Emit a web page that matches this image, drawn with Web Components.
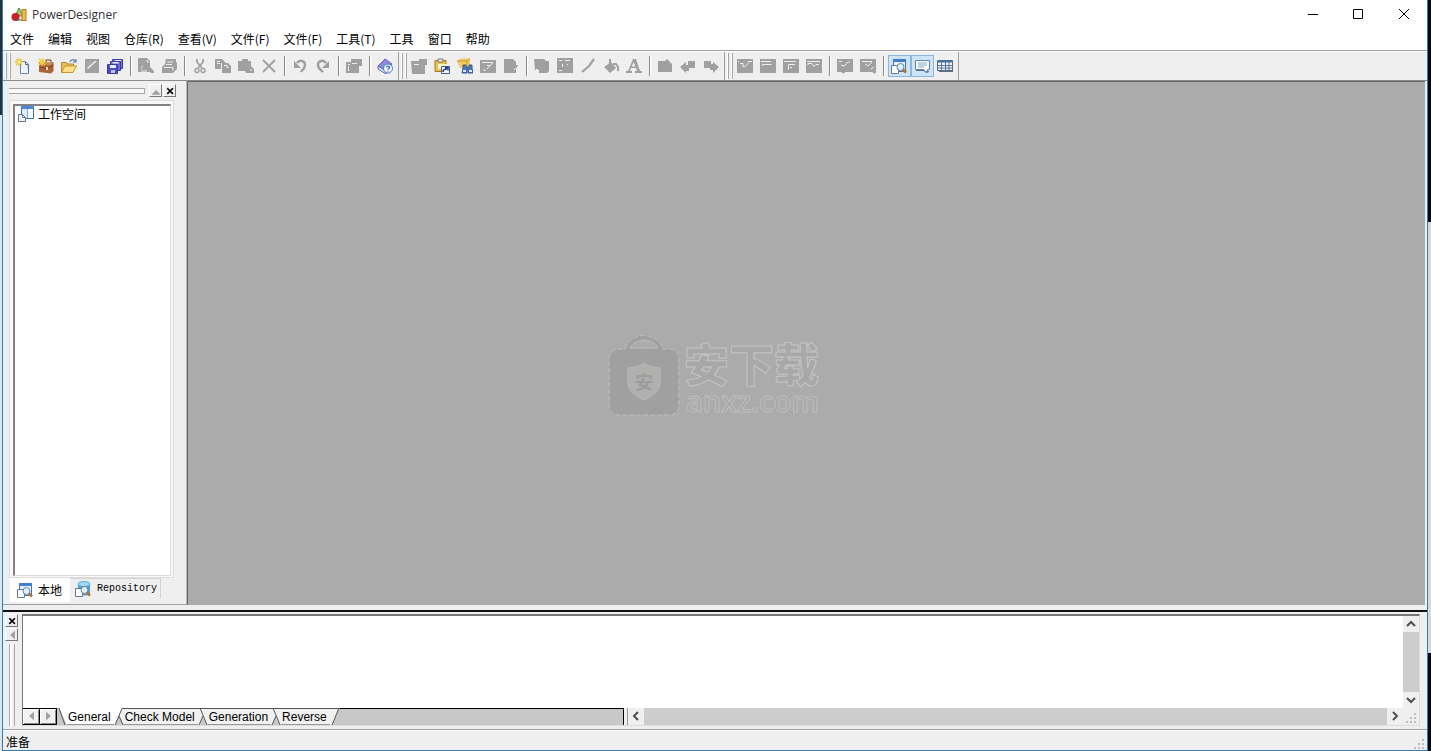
<!DOCTYPE html>
<html lang="zh-CN">
<head>
<meta charset="utf-8">
<title>PowerDesigner</title>
<style>
  html, body { margin: 0; height: 100%; overflow: hidden; }
  body { font: 12px/16px "Noto Sans CJK SC", "Open Sans", sans-serif; color: #000; }
</style>
</head>
<body>
<pd-app></pd-app>
<script>
const G = '#a0a0a0', L = '#efefef';
const ICONS = {
  app: `<path d="M8 1 12 9H4Z" fill="#9bd36a" stroke="#4f8a35"/><rect x="11" y="2.500" width="4" height="11" fill="#f3bb4c" stroke="#b57b1e"/><circle cx="4.500" cy="10" r="4" fill="#c8202c"/><path d="M4 13h7" stroke="#555"/>`,
  new: `<path d="M5.500 3.500h5l3 3v9h-8Z" fill="#eef4fd" stroke="#6d86ad"/><path d="M10.500 3.500v3h3v8" fill="#b9cff0" stroke="#4d6ea3"/><path d="M4 0v8M0 4h8M1 1l6 6M7 1 1 7" stroke="#e8c532" stroke-width="1.300"/><circle cx="4" cy="4" r="1.500" fill="#fff9a8"/>`,
  project: `<path d="M1 4h14.500v9L13 15.500 1 14Z" fill="#a8663a"/><path d="M1 4h14.500l-3 3H2Z" fill="#c98f60"/><path d="M8 4V2h5v2" fill="none" stroke="#6b3819"/><path d="M2 9l6 1.500 5-1.500 2.500-2" fill="none" stroke="#7b4823"/><path d="M8 9h2v3H8z" fill="#e9d0b0"/><path d="M4 0v8M0 4h8M1 1l6 6M7 1 1 7" stroke="#f0cf3a" stroke-width="1.200"/>`,
  open: `<path d="M.500 14.500v-10h5l1 1.500h6v3" fill="#e8bd52" stroke="#b58a30"/><path d="M.500 14.500 4 8h11.500L12 14.500Z" fill="#ffe08a" stroke="#c59630"/><path d="M9 4c1-3 4-3 5.500-.500M15 1v3h-3" fill="none" stroke="#5f7fb2" stroke-width="1.200"/>`,
  save: `<path d="M1 1h14v14H1z" fill="${G}"/><path d="M3 3h9v1L4 11H3z" fill="#a8a8a8"/><path d="M3 10 11 3h2L4 11z" fill="${L}"/>`,
  saveall: `<g stroke="#3b3b9c"><path d="M5.500 1.500h10v9h-10z" fill="#7b7bdc"/><path d="M3.500 3.500h10v9h-10z" fill="#6d6dd4"/><path d="M.500 6.500h10v9h-10z" fill="#4d4dbd"/></g><path d="M3 7h6v3H3zM5.500 4h6v1.500h-6zM8 2h6v1H8z" fill="#e8ecff"/><path d="M4 12h4v3H4z" fill="#b9c0ee"/>`,
  preview: `<path d="M1 0h8l3 3v6l4 4v2h-3l-1-1H0V1z" fill="${G}"/><path d="M3 11c1-1 1-2 1.500-3.500M9 2v2h2" fill="none" stroke="${L}"/><circle cx="8" cy="8" r="3" fill="${G}"/><path d="M3 13h6" stroke="${L}"/>`,
  print: `<path d="M5 1h10v3l1 1v6l-4 4H1V9l3-3z" fill="${G}"/><path d="M6 4h6M5 6.500h6M3 9.500h9v3" fill="none" stroke="${L}"/>`,
  cut: `<path d="M5 1v3l5 6M11 1v3L6 10" fill="none" stroke="${G}" stroke-width="1.800"/><circle cx="5" cy="12.500" r="2" fill="none" stroke="${G}" stroke-width="1.500"/><circle cx="11" cy="12.500" r="2" fill="none" stroke="${G}" stroke-width="1.500"/>`,
  copy: `<path d="M0 1h7l3 3v7H0zM7 5h6l3 3v7H7z" fill="${G}"/><path d="M2 3.500h3M2 5.500h3M6.500 5v7M9 7.500h3v2h2" fill="none" stroke="${L}"/>`,
  paste: `<path d="M0 3h4V1h6v2h3v5l3 3v4H8l-1-2H0z" fill="${G}"/><path d="M12 12h2" stroke="${L}"/>`,
  del: `<path d="M2 2l12 12M14 2 2 14" stroke="${G}" stroke-width="1.800"/>`,
  undo: `<path d="M5 5c3-4 8-2 8 2 0 4-3 5-4 7" fill="none" stroke="${G}" stroke-width="2.400"/><path d="M2 3v7h7z" fill="${G}"/>`,
  redo: `<path d="M11 5C8 1 3 3 3 7c0 4 3 5 5 7" fill="none" stroke="${G}" stroke-width="2.400"/><path d="M14 3v7H7z" fill="${G}"/>`,
  props: `<path d="M5 1h11v7h-3v7H0V4h5z" fill="${G}"/><path d="M2 6.500h2M2.500 8v5M6 5.500h5" stroke="${L}"/>`,
  help: `<path d="M1 8 8 1l7 5-6 8z" fill="#8c8cdc" stroke="#6464b8"/><path d="M1 8v3l8 5v-3z" fill="#e5e5fa" stroke="#6464b8"/><circle cx="11" cy="10.500" r="4.500" fill="#f2f7ff" stroke="#477bc0"/><path d="M9.500 9.500c0-2 3-2 3 0 0 1-1.500 1-1.500 2M11 12.500v1" fill="none" stroke="#285ca8" stroke-width="1.200"/>`,
  newobj: `<path d="M0 3h8V1h8v6h-2v9H1z" fill="${G}"/><path d="M3 6.500h5" stroke="${L}"/>`,
  pasteSc: `<path d="M1 2.500h11v11H1z" fill="#eabf4e" stroke="#a77b20"/><path d="M4 1h5v3H4z" fill="#eee" stroke="#777"/><path d="M4 6h9v5H4z" fill="#fff4c9"/><path d="M7.500 8.500h8v7h-8z" fill="#f2f7ff" stroke="#3f5c99"/><path d="M9 14c0-3 2-3 4-3M11 9.500h3v3" fill="none" stroke="#223a80" stroke-width="1.500"/>`,
  find: `<path d="M0 3 3 .500h10V8L10 10H3z" fill="#f3cc62"/><path d="M0 3h10l3-2.500M10 3v5" fill="none" stroke="#c89a38"/><path d="M6 7h3v2h3V7h3v3l1 5h-5v-3h-1v3H5l1-5z" fill="#4a76b8" stroke="#3a5c92"/><path d="M6 13h3M12 13h3" stroke="#dce9ff" stroke-width="2"/>`,
  edit: `<path d="M0 2h16v13H0z" fill="${G}"/><path d="M2 4.500h11L7 11M3 12h3M7 7.500h3" fill="none" stroke="${L}"/>`,
  page: `<path d="M1 1h9l3 3v3h2l-2 4v4H1z" fill="${G}"/><path d="M11 12l2-2" stroke="${L}"/>`,
  layers: `<path d="M0 1h10l2 2h3v10l-2 2H5v-3H1z" fill="${G}"/><path d="M2 11.500h2M3.500 13h1" stroke="${L}"/>`,
  grid: `<path d="M0 0h16v15H0z" fill="${G}"/><path d="M2 2.500h3M2 12.500h3M8 2.500h5M5.500 6v3M10 6.500h1" stroke="${L}"/>`,
  line: `<path d="M2 14 9 8l5-7" fill="none" stroke="${G}" stroke-width="2.200"/>`,
  fill: `<path d="M1 9 8 4l5 6-6 5z" fill="${G}"/><path d="M7 7V1M10 6h3l2 3v4" fill="none" stroke="${G}" stroke-width="2"/>`,
  text: `<path d="M7 1h3l4 12h2v2H9v-2h2l-1-3H5l-1 3h2v2H0v-2h2zM5.700 8.500h3.700L7.600 4z" fill="${G}"/>`,
  up: `<path d="M1 3h7l2-2 5 5v8H1z" fill="${G}"/>`,
  left: `<path d="M0 9 6 4v3h2V3h7v7H9v3H6v2z" fill="${G}"/>`,
  right: `<path d="M16 9 10 4v2H8V3H1v7h6v2h3v3z" fill="${G}"/>`,
  c1: `<path d="M0 1h16v14H0z" fill="${G}"/><path d="M1 3.500h1M3 5.500h3v3h2l4-4M11 3.500h4" fill="none" stroke="${L}"/>`,
  c2: `<path d="M0 1h16v14H0z" fill="${G}"/><path d="M1 3.500h10M2.500 8V6.500h9" fill="none" stroke="${L}"/>`,
  c3: `<path d="M0 1h16v14H0z" fill="${G}"/><path d="M1 3.500h12M5.500 12V6.500H12M7 9.500h2" fill="none" stroke="${L}"/>`,
  c4: `<path d="M0 1h16v14H0z" fill="${G}"/><path d="M1 3.500h13M2 7V5.500h4l2 3 2-2h3" fill="none" stroke="${L}"/>`,
  d1: `<path d="M0 1h16v13h-8l-1 2-3-2H0z" fill="${G}"/><path d="M2 3.500h3M4 7l3 1 4-4h2" fill="none" stroke="${L}"/>`,
  d2: `<path d="M0 1h16v13l-1 2-3-2H0z" fill="${G}"/><path d="M2 3.500h10M5 6l3 2 4-4M11 11l3-2" fill="none" stroke="${L}"/>`,
  browser: `<path d="M2.500 1.500h12v12h-12z" fill="#e8f3ff" stroke="#3f72b4"/><path d="M2 1h13v3H2z" fill="#3f7ed0"/><path d="M.500 7.500h5l2 2v6h-7z" fill="#fff" stroke="#68798c"/><circle cx="9.500" cy="9" r="3.500" fill="#dff1fc" stroke="#66839d"/><path d="m12 11.500 3 3" stroke="#b5702e" stroke-width="2.500"/>`,
  output: `<path d="M1.500 2.500h14v9h-2v2h-2l-2-2h-8z" fill="#f6fbff" stroke="#6486ad"/><path d="M4 5h9M4 7h9M4 9h6" stroke="#8ba5c4"/><path d="M2 12.500h8l2 2 3-1" fill="none" stroke="#4e6d91"/>`,
  result: `<path d="M.500 2.500h15v10H.500z" fill="#edf5fe" stroke="#506b92"/><path d="M1 3.500h14" stroke="#45739b" stroke-width="2"/><path d="M1 7.500h14M1 10h14M4.500 4v9M8.500 4v9M12 4v9" stroke="#587399"/><path d="M2 13.500h14V4" fill="none" stroke="#5f6f84"/>`,
  workspace: `<path d="M3.500 .500h12v12h-12z" fill="#deedff" stroke="#3b71b8"/><path d="M3 0h13v3H3z" fill="#4b87d5"/><path d="M10 3h5v9h-5z" fill="#f7fbff"/><path d="M9.500 3v9" stroke="#7ba5db"/><path d="M.500 8.500h4l3 3v4h-7z" fill="#eef2f8" stroke="#637895"/><path d="M4.500 8.500v3h3" fill="none" stroke="#637895"/>`,
  repo: `<path d="M3 3v10c2 2 10 2 12 0V3z" fill="#4ca0da"/><ellipse cx="9" cy="3" rx="6" ry="2.500" fill="#a4d8f4" stroke="#5ba9d4"/><path d="M.500 7.500h5l2 2v6h-7z" fill="#fff" stroke="#68798c"/><circle cx="9.500" cy="9" r="3.500" fill="#dff1fc" stroke="#66839d"/><path d="m12 11.500 3 3" stroke="#b5702e" stroke-width="2.500"/>`,
  min: `<path d="M4 7.500h10" stroke="#000"/>`,
  max: `<path d="M3.500 2.500h9v9h-9z" fill="none" stroke="#000"/>`,
  close: `<path d="m3 2 10 10M13 2 3 12" stroke="#000"/>`,
  x: `<path d="m4 4 7 7M11 4l-7 7" stroke="#000" stroke-width="2"/>`,
  tup: `<path d="M2 12h11L7.500 6z" fill="${G}"/>`,
  tleft: `<path d="M11 2v11L5 7.500z" fill="${G}"/>`,
  tright: `<path d="M5 2v11l6-5.500z" fill="${G}"/>`,
  aup: `<path d="m4 10 4-4 4 4" fill="none" stroke="#505050" stroke-width="2"/>`,
  adown: `<path d="m4 6 4 4 4-4" fill="none" stroke="#505050" stroke-width="2"/>`,
  aleft: `<path d="M10 4 6 8l4 4" fill="none" stroke="#505050" stroke-width="2"/>`,
  aright: `<path d="m6 4 4 4-4 4" fill="none" stroke="#505050" stroke-width="2"/>`,
  size: `<path d="M11 5h2v2h-2zM11 9h2v2h-2zM7 9h2v2H7zM11 13h2v2h-2zM7 13h2v2H7zM3 13h2v2H3z" fill="#bdbdbd"/>`
};
const BASE = `*{box-sizing:border-box} button{font:inherit;color:inherit;border:0;padding:0;margin:0;background:none;display:block}`;
function define(name, html) {
  customElements.define(name, class extends HTMLElement {
    constructor() {
      super();
      this.attachShadow({ mode: 'open' });
    }
    connectedCallback() {
      this.shadowRoot.innerHTML = typeof html === 'function' ? html(this) : html;
    }
  });
}

define('pd-icon', el => `<style>:host{display:block;flex:none;width:16px;height:16px}svg{display:block;width:100%;height:100%}</style>
<svg viewBox="0 0 16 16" aria-hidden="true">${ICONS[el.getAttribute('name')]}</svg>`);

define('pd-title', `<style>${BASE}
:host{display:flex;align-items:center;height:29px;padding-left:8px;background:#fff;font-family:"Open Sans",sans-serif;color:#333}
span{flex:1;padding-left:5px}
button{width:46px;height:28px;display:grid;place-items:center}
</style><pd-icon name="app"></pd-icon><span><slot></slot></span>
<button aria-label="Minimize"><pd-icon name="min"></pd-icon></button>
<button aria-label="Maximize"><pd-icon name="max"></pd-icon></button>
<button aria-label="Close"><pd-icon name="close"></pd-icon></button>`);

define('pd-menu', el => `<style>${BASE}
:host{display:block;background:#fff}
nav{display:flex;height:21px}
button{padding:0 7px 2px;height:21px;white-space:nowrap}
</style><nav>${el.getAttribute('items').split(',').map(t => `<button>${t}</button>`).join('')}</nav>`);

define('pd-toolbar', el => `<style>${BASE}
:host{display:flex;align-items:center;height:28px;padding-right:1px;border-right:1px solid #a0a0a0}
.grip{width:9px;height:26px;display:flex;gap:2px;padding-left:2px}
.grip i{width:2px;border-right:1px solid #a6a6a6;background:#fff}
hr{width:2px;height:20px;margin:0 3px;border:0;border-left:1px solid #8a8a8a;background:#fff}
button{width:23px;height:22px;padding:3px 4px 3px 3px;border:0}
button[aria-pressed]{background:#cfe3f5;box-shadow:inset 0 0 0 1px #86b8e4}
</style><span class="grip"><i></i><i></i></span>${el.getAttribute('tools').split(' ').map(n =>
  n === '|' ? '<hr>' : `<button aria-label="${n.replace('*','')}" ${n.endsWith('*') ? 'aria-pressed="true"' : ''}><pd-icon name="${n.replace('*','')}"></pd-icon></button>`).join('')}`);

define('pd-small-button', el => `<style>${BASE}
:host{display:block;flex:none}
button{width:13px;height:13px;background:#efefef;border:1px solid;border-color:#fff #777 #777 #fff;display:grid;place-items:center;overflow:hidden}
pd-icon{width:13px;height:13px}
</style><button aria-label="${el.getAttribute('label')}"><pd-icon name="${el.getAttribute('icon')}"></pd-icon></button>`);

define('pd-browser', `<style>${BASE}
:host{display:flex;flex-direction:column;flex:none;width:184px;padding:3px 12px 2px 6px;background:#efefef;border-bottom:1px solid #a0a0a0;border-right:1px solid #b8b8b8}
header{display:flex;align-items:center;gap:1px;height:13px;flex:none;margin-right:-2px}
.grip{flex:1;height:6px;border:1px solid #a6a6a6;border-width:1px 1px 1px 0;margin-right:3px;background:#f8f8f8}
.frame{flex:1;display:flex;border:1px solid #dcdcdc;background:#f8f8f8;padding:3px 2px 1px 3px;margin-top:3px}
ul{flex:1;margin:0;padding:0;list-style:none;background:#fff;border:1px solid #dcdcdc;border-top:2px solid #828282;border-left:2px solid #828282}
li{display:flex;align-items:center;gap:4px;height:16px;padding-left:3px}
.tabs{display:flex;flex:none;height:24px;padding-left:1px;align-items:flex-start}
.tabs button{display:flex;align-items:center;height:20px;gap:6px;padding:0 3px 0 5px;border:1px solid #d4d4d4;border-width:1px 1px 0 0;font:10px/16px "Liberation Mono",monospace;white-space:nowrap}
.tabs button.on{height:24px;gap:5px;padding:0 8px 0 7px;background:#fff;border:0;font:12px/16px "Noto Sans CJK SC",sans-serif}
</style>
<header><span class="grip"></span><pd-small-button icon="tup" label="Collapse"></pd-small-button><pd-small-button icon="x" label="Close"></pd-small-button></header>
<div class="frame"><ul><li><pd-icon name="workspace"></pd-icon>工作空间</li></ul></div>
<div class="tabs"><button class="on"><pd-icon name="browser"></pd-icon>本地</button><button><pd-icon name="repo"></pd-icon>Repository</button></div>`);

define('pd-watermark', `<style>${BASE}
:host{position:absolute;inset:0;display:flex;align-items:center;justify-content:center;gap:4px;pointer-events:none}
svg{width:72px;height:82px;flex:none}
div{display:flex;flex-direction:column;width:138px;height:82px;padding-top:6px;color:#a8a8a8;white-space:nowrap}
b{font:900 45px/46px "Noto Sans CJK SC",sans-serif;-webkit-text-stroke:1px #c4c4c4}
span{font:600 29px/30px "Open Sans",sans-serif;-webkit-text-stroke:1px #bebebe;padding-left:2px}
</style>
<svg viewBox="0 0 72 82" aria-hidden="true"><path d="M17 15C23-3 49-3 55 15h5q11 0 11 11v44q0 11-11 11H12Q1 81 1 70V26q0-11 11-11z" fill="#a0a0a0" stroke="#bdbdbd" stroke-dasharray="5 2"/><path d="M22 14c5-10 23-10 28 0z" fill="#ababab" stroke="#bebebe"/><path d="M36 29c5 4 10 4 16 5v14c0 10-8 14-16 18-8-4-16-8-16-18V34c6-1 11-1 16-5z" fill="#b0b0ae" stroke="#bababa"/><text x="36" y="55" text-anchor="middle" font-family="Noto Sans CJK SC" font-size="18" font-weight="700" fill="#9c9c9c">安</text></svg>
<div><b>安下载</b><span>anxz.com</span></div>`);

define('pd-sheet-tabs', `<style>${BASE}
:host{display:flex;height:17px;min-width:0;background:#c8c8c8;border-right:1px solid #000;font:12px/16px "Liberation Sans",Arial,sans-serif}
button{height:17px;padding:0 3px 0 1px;white-space:nowrap;background:#f1f1f1;border-top:1px solid #555;border-bottom:1px solid #999}
button.on{background:#fff;border-top-color:#fff}
.nav{width:17px;padding:0;border:1px solid #000;border-width:1px 1px 1px 0;display:grid;place-items:center;box-shadow:inset 1px 1px #fff,inset -1px -1px #888}
.nav pd-icon{width:13px;height:13px}
svg{flex:none;width:10px;height:17px;fill:none;stroke:#555}
.rest{flex:1;border-top:1px solid #000}
</style>
<button class="nav" aria-label="Previous tab"><pd-icon name="tleft"></pd-icon></button><button class="nav" aria-label="Next tab"><pd-icon name="tright"></pd-icon></button>
<svg viewBox="0 0 10 17"><path d="M2 0h8v17z" fill="#fff" stroke="none"/><path d="M2 0l6 17"/></svg><button class="on">General</button>
<svg viewBox="0 0 10 17"><path d="M0 0h8L1 17H0z" fill="#fff" stroke="none"/><path d="M8 0h2v17L5 7z" fill="#f1f1f1" stroke="none"/><path d="M10 .500H8L1 17M5 8l4 9"/></svg><button>Check Model</button>
<svg viewBox="0 0 10 17"><path d="M0 0h10v17H9L5 9 1 17H0z" fill="#f1f1f1" stroke="none"/><path d="M0 .500h10M2 0l7 17M5 8l-4 9"/></svg><button>Generation</button>
<svg viewBox="0 0 10 17"><path d="M0 0h10v17H9L5 9 1 17H0z" fill="#f1f1f1" stroke="none"/><path d="M0 .500h10M2 0l7 17M5 8l-4 9"/></svg><button>Reverse</button>
<svg viewBox="0 0 10 17"><path d="M0 0h9L2 17H0z" fill="#f1f1f1" stroke="none"/><path d="M0 .500h10M9 0 2 17"/></svg>
<div class="rest"></div>`);

define('pd-scroll', el => { const v = el.hasAttribute('vertical'); return `<style>${BASE}
:host{display:flex;flex-direction:${v ? 'column' : 'row'};background:#efefef;min-width:0}
button{flex:none;width:16px;height:16px}
i{flex:1;background:#cdcdcd}
</style><button aria-label="Scroll back"><pd-icon name="${v ? 'aup' : 'aleft'}"></pd-icon></button><i></i><button aria-label="Scroll forward"><pd-icon name="${v ? 'adown' : 'aright'}"></pd-icon></button>`; });

define('pd-output', `<style>${BASE}
:host{display:flex;flex:none;height:119px;border-top:2px solid #111;background:#efefef;padding:2px 7px 3px 2px;gap:4px}
aside{display:flex;flex-direction:column;gap:1px;width:13px;flex:none}
.grip{flex:1;margin:2px 3px 0 4px;border:1px solid #aaa;border-width:0 1px;background:#fff;box-shadow:inset -2px 0 #efefef}
.view{flex:1;min-width:0;display:grid;grid-template:1fr 17px / minmax(0,1fr) 16px;border:1px solid #ddd;border-top:2px solid #777;border-left:1px solid #777}
.text{background:#fff}
.row{display:grid;grid-template-columns:31fr 4px 40fr}
.split{background:#efefef;border-right:1px solid #999}
</style>
<aside><pd-small-button icon="x" label="Close"></pd-small-button><pd-small-button icon="tleft" label="Collapse"></pd-small-button><span class="grip"></span></aside>
<div class="view"><div class="text"></div><pd-scroll vertical></pd-scroll>
<div class="row"><pd-sheet-tabs></pd-sheet-tabs><span class="split"></span><pd-scroll></pd-scroll></div><pd-icon name="size"></pd-icon></div>`);

define('pd-status', `<style>:host{display:flex;justify-content:space-between;align-items:flex-end;flex:none;height:21px;box-sizing:border-box;padding-left:3px;background:#efefef;border-top:1px solid #a0a0a0;box-shadow:inset 0 1px #fff}</style><span><slot></slot></span><pd-icon name="size"></pd-icon>`);

define('pd-app', `<style>${BASE}
:host{display:grid;grid-template-columns:2px minmax(0,1fr) 3px;height:100vh}
.l{background:linear-gradient(#26313d 15.300%,#dfe6ea 0)}
.r{background:linear-gradient(#020a18 29.600%,#d3dadd 0 87%,#020a18 0)}
main{position:relative;display:flex;flex-direction:column;border:1px solid #2a7fb8;border-top:0;background:#efefef;min-width:0}
.bars{display:flex;flex:none;height:31px;padding-top:1px;border-top:1px solid #a0a0a0;border-bottom:1px solid #8c8c8c;box-shadow:inset 0 1px #fff}
.mid{flex:1;display:flex;min-height:0;margin-bottom:5px}
.canvas{flex:1;background:#ababab;border:1px solid #666;border-width:1px 0 0 1px;margin-right:2px}
</style>
<div class="l"></div>
<main>
<pd-title>PowerDesigner</pd-title>
<pd-menu items="文件,编辑,视图,仓库(R),查看(V),文件(F),文件(F),工具(T),工具,窗口,帮助"></pd-menu>
<div class="bars">
<pd-toolbar tools="new project open save saveall | preview print | cut copy paste del | undo redo | props | help"></pd-toolbar>
<pd-toolbar tools="newobj pasteSc find edit page | layers grid line fill text | up left right"></pd-toolbar>
<pd-toolbar tools="c1 c2 c3 c4 | d1 d2 | browser* output* result"></pd-toolbar>
</div>
<div class="mid"><pd-browser></pd-browser><div class="canvas"></div></div>
<pd-output></pd-output>
<pd-status>准备</pd-status>
<pd-watermark></pd-watermark>
</main>
<div class="r"></div>`);
</script>
</body>
</html>
